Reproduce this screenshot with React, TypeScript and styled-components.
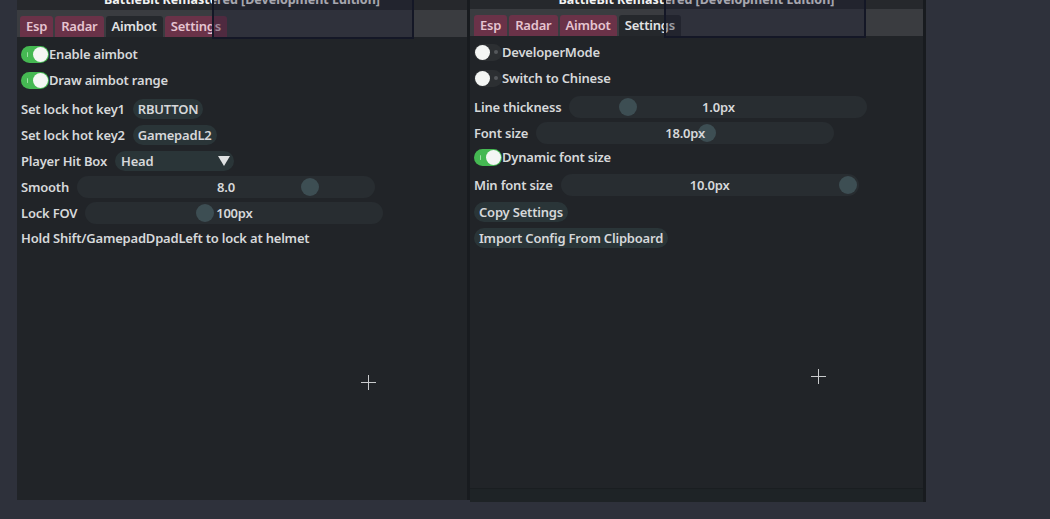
import styled, { createGlobalStyle } from 'styled-components';

const COLORS = {
  page: '#2e313b',
  panel: '#212428',
  titleBar: '#26282c',
  tabBar: '#3a3c40',
  tab: '#6a3248',
  tabText: '#e6c4d0',
  tabActive: '#25282c',
  text: '#d6d8da',
  widget: '#2a3538',
  slider: '#282d31',
  knob: '#3d4e53',
  green: '#45b852',
  offTrack: '#2c2f32',
  border: '#181b1f',
};

const GlobalStyle = createGlobalStyle`
  body {
    margin: 0;
    background: ${COLORS.page};
    font-family: "Noto Sans", "Open Sans", sans-serif;
    overflow: hidden;
  }
`;

type Tab = 'Esp' | 'Radar' | 'Aimbot' | 'Settings';
const TABS: Tab[] = ['Esp', 'Radar', 'Aimbot', 'Settings'];

function Window({
  active,
  width,
  crossX,
  crossY,
  second,
  children,
}: {
  active: Tab;
  width: number;
  crossX: number;
  crossY: number;
  second?: boolean;
  children: React.ReactNode;
}) {
  return (
    <Frame $width={width} $second={!!second}>
      <TitleBar $second={!!second}>
        <Title>BattleBit Remastered [Development Edition]</Title>
      </TitleBar>
      <TabBar $second={!!second}>
        {TABS.map((t) => (
          <TabButton key={t} $active={t === active}>
            {t}
          </TabButton>
        ))}
      </TabBar>
      <Body $second={!!second}>{children}</Body>
      {second && <Footer />}
      <Overlay $second={!!second} />
      <Crosshair $x={crossX} $y={crossY} />
    </Frame>
  );
}

function Toggle({ on, label, mt }: { on?: boolean; label: string; mt?: number }) {
  return (
    <Row $gap={0} $mt={mt}>
      <Track $on={!!on}>
        <Knob $on={!!on} />
      </Track>
      <Label>{label}</Label>
    </Row>
  );
}

function Slider({
  label,
  value,
  pos,
  mt,
}: {
  label: string;
  value: string;
  pos: number;
  mt?: number;
}) {
  return (
    <Row $mt={mt}>
      <Label>{label}</Label>
      <SliderTrack>
        <SliderKnob style={{ left: `${pos * 278}px` }} />
        <SliderValue>{value}</SliderValue>
      </SliderTrack>
    </Row>
  );
}

function App() {
  return (
    <>
      <GlobalStyle />
      <Page>
        <Window active="Aimbot" width={453} crossX={351} crossY={382}>
          <Toggle on label="Enable aimbot" />
          <Toggle on label="Draw aimbot range" />
          <Row $mt={3}>
            <Label>Set lock hot key1</Label>
            <Pill>RBUTTON</Pill>
          </Row>
          <Row>
            <Label>Set lock hot key2</Label>
            <Pill>GamepadL2</Pill>
          </Row>
          <Row>
            <Label>Player Hit Box</Label>
            <Combo>
              Head
              <Arrow />
            </Combo>
          </Row>
          <Slider label="Smooth" value="8.0" pos={0.8} />
          <Slider label="Lock FOV" value="100px" pos={0.39} />
          <Row $mt={-1}>
            <Label>Hold Shift/GamepadDpadLeft to lock at helmet</Label>
          </Row>
        </Window>
        <Window active="Settings" width={456} crossX={348} crossY={376} second>
          <Toggle label="DeveloperMode" />
          <Toggle label="Switch to Chinese" />
          <Slider label="Line thickness" value="1.0px" pos={0.17} mt={3} />
          <Slider label="Font size" value="18.0px" pos={0.575} />
          <Toggle on label="Dynamic font size" mt={-2} />
          <Slider label="Min font size" value="10.0px" pos={0.995} mt={2} />
          <Row $mt={1}>
            <Pill>Copy Settings</Pill>
          </Row>
          <Row>
            <Pill>Import Config From Clipboard</Pill>
          </Row>
        </Window>
      </Page>
    </>
  );
}

const Page = styled.div`
  display: flex;
  align-items: flex-start;
  padding-left: 17px;
  height: 519px;
`;

const Frame = styled.div<{ $width: number; $second: boolean }>`
  position: relative;
  display: flex;
  flex-direction: column;
  box-sizing: border-box;
  width: ${({ $width }) => $width}px;
  height: ${({ $second }) => ($second ? 502 : 500)}px;
  background: ${COLORS.panel};
  overflow: hidden;
  border-right: 3px solid ${COLORS.border};
`;

const TitleBar = styled.div<{ $second: boolean }>`
  height: ${({ $second }) => ($second ? 9 : 10)}px;
  overflow: hidden;
  background: ${COLORS.titleBar};
  display: flex;
  justify-content: center;
`;

const Title = styled.div`
  margin-top: -8px;
  font-size: 12.5px;
  line-height: 15px;
  font-weight: 700;
  color: #f2f2f2;
  white-space: nowrap;
`;

const TabBar = styled.div<{ $second: boolean }>`
  display: flex;
  align-items: flex-end;
  gap: 2px;
  height: 27px;
  padding: 0 ${({ $second }) => ($second ? 4 : 3)}px;
  background: ${COLORS.tabBar};
`;

const TabButton = styled.div<{ $active: boolean }>`
  height: 21px;
  line-height: 21px;
  padding: 0 6px;
  font-size: 13px;
  font-weight: 600;
  letter-spacing: -0.2px;
  border-radius: 3px 3px 0 0;
  background: ${({ $active }) => ($active ? COLORS.tabActive : COLORS.tab)};
  color: ${({ $active }) => ($active ? '#e2e3e4' : COLORS.tabText)};
`;

const Body = styled.div<{ $second: boolean }>`
  flex: 1;
  display: flex;
  flex-direction: column;
  gap: 4px;
  padding: ${({ $second }) => ($second ? 5 : 6)}px 4px;
`;

const Footer = styled.div`
  height: 13px;
  background: #1e2326;
  border-top: 1px solid #1a1e21;
`;

const Row = styled.div<{ $gap?: number; $mt?: number }>`
  display: flex;
  align-items: center;
  gap: ${({ $gap }) => $gap ?? 8}px;
  height: 22px;
  margin-top: ${({ $mt }) => $mt ?? 0}px;
`;

const Label = styled.span`
  font-size: 13px;
  font-weight: 600;
  letter-spacing: -0.2px;
  color: ${COLORS.text};
  white-space: nowrap;
`;

const Track = styled.div<{ $on: boolean }>`
  position: relative;
  width: 28px;
  height: 17px;
  border-radius: 9px;
  background: ${({ $on }) => ($on ? COLORS.green : COLORS.offTrack)};

  &::after {
    content: '';
    position: absolute;
    top: 6px;
    left: ${({ $on }) => ($on ? '6px' : '20px')};
    width: ${({ $on }) => ($on ? '1px' : '4px')};
    height: ${({ $on }) => ($on ? '5px' : '4px')};
    border-radius: 2px;
    background: ${({ $on }) => ($on ? '#9fe0a6' : '#55585c')};
  }
`;

const Knob = styled.div<{ $on: boolean }>`
  position: absolute;
  top: 1px;
  left: ${({ $on }) => ($on ? '12px' : '1px')};
  width: 15px;
  height: 15px;
  border-radius: 50%;
  background: #f4f6f4;
  z-index: 1;
`;

const Pill = styled.div`
  height: 20px;
  line-height: 20px;
  padding: 0 5px;
  border-radius: 10px;
  background: ${COLORS.widget};
  color: ${COLORS.text};
  font-size: 13px;
  font-weight: 600;
  letter-spacing: -0.2px;
  white-space: nowrap;
`;

const Combo = styled(Pill)`
  position: relative;
  width: 108px;
  padding-left: 6px;
`;

const Arrow = styled.span`
  position: absolute;
  right: 4px;
  top: 5px;
  width: 0;
  height: 0;
  border-left: 6px solid transparent;
  border-right: 6px solid transparent;
  border-top: 10px solid #dfe1e2;
`;

const SliderTrack = styled.div`
  position: relative;
  width: 298px;
  height: 22px;
  border-radius: 11px;
  background: ${COLORS.slider};
  display: flex;
  align-items: center;
  justify-content: center;
`;

const SliderKnob = styled.div`
  position: absolute;
  top: 2px;
  width: 18px;
  height: 18px;
  margin-left: 2px;
  border-radius: 50%;
  background: ${COLORS.knob};
`;

const SliderValue = styled.span`
  position: relative;
  font-size: 13px;
  font-weight: 600;
  letter-spacing: -0.2px;
  color: ${COLORS.text};
`;

const Overlay = styled.div<{ $second: boolean }>`
  position: absolute;
  left: ${({ $second }) => ($second ? 194 : 195)}px;
  top: -3px;
  width: 198px;
  height: ${({ $second }) => ($second ? 37 : 38)}px;
  border: 2px solid #141726;
  background: rgba(28, 30, 52, 0.35);
`;

const Crosshair = styled.div<{ $x: number; $y: number }>`
  position: absolute;
  left: ${({ $x }) => $x - 7}px;
  top: ${({ $y }) => $y - 7}px;
  width: 15px;
  height: 15px;

  &::before,
  &::after {
    content: '';
    position: absolute;
    background: #c9cbcd;
  }
  &::before {
    left: 7px;
    top: 0;
    width: 1px;
    height: 15px;
  }
  &::after {
    top: 7px;
    left: 0;
    width: 15px;
    height: 1px;
  }
`;

export default App;
